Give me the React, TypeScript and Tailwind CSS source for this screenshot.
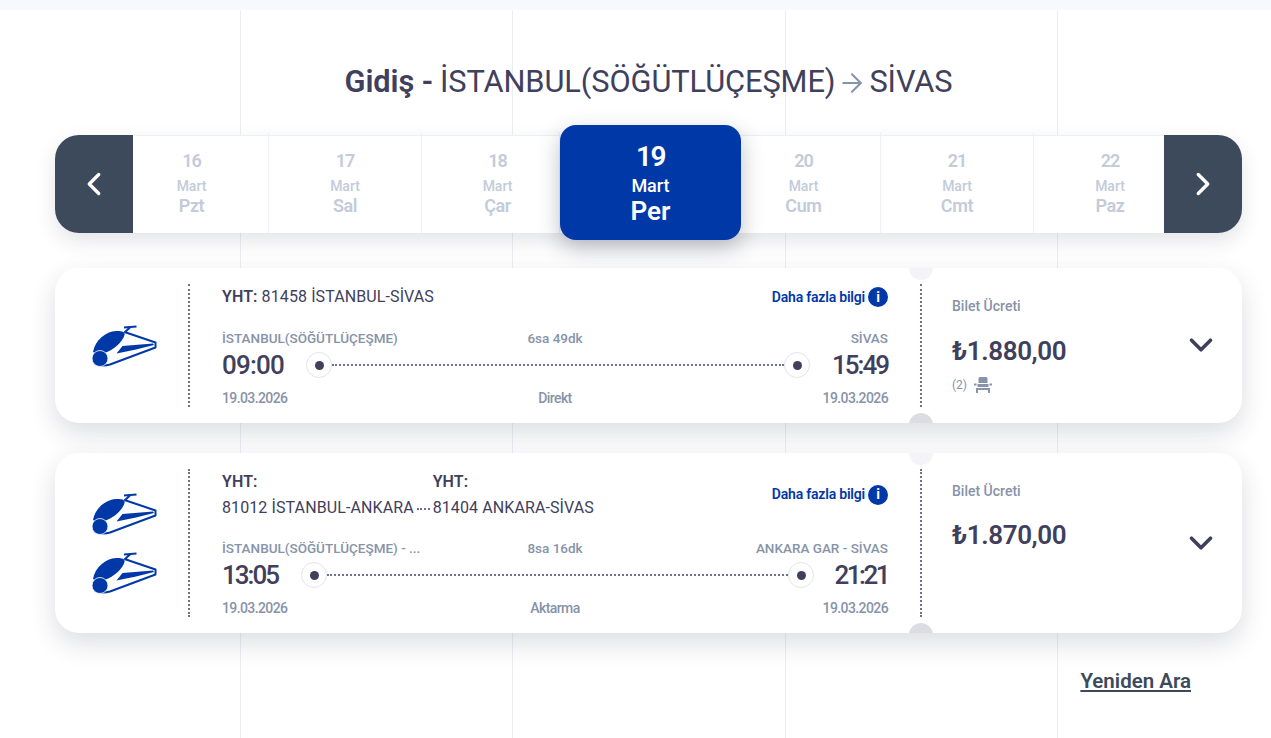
import React from "react";
import { ArrowRight, ChevronLeft, ChevronRight, ChevronDown } from "lucide-react";

const TrainIcon = () => (
  <svg width="65" height="42" viewBox="0 0 65 42" fill="none" className="block">
    <path d="M32.5 7 L63.5 17.5 L63.5 22.5 L18 39.5 C14 40.5 10 40.5 8 40" stroke="#0038a8" strokeWidth="2" strokeLinejoin="round" />
    <path d="M1 27 C3 15 14 6.5 24 6 C28 5.8 33.5 6 32.5 10 C30.5 17 22 25 12 28 C8 29 4 29 1 27 Z" fill="#0038a8" />
    <circle cx="8" cy="33.5" r="8" fill="#0038a8" stroke="#ffffff" strokeWidth="0.8" />
    <path d="M24.5 28.5 L30.5 21 L61 18.5 L62 20 L44 24.5 Z" fill="#0038a8" />
    <path d="M32 2.5 L44.5 1.5 M38.5 2 L32.5 7.5" stroke="#0038a8" strokeWidth="2" />
  </svg>
);

const SeatIcon = () => (
  <svg width="18" height="16" viewBox="0 0 18 16" fill="#8793a8" className="block">
    <path d="M4.5 1.5 Q4.5 0 6 0 H12 Q13.5 0 13.5 1.5 V6 H4.5 Z" />
    <rect x="3.5" y="7" width="11" height="3" />
    <rect x="0" y="6.5" width="2.5" height="2" />
    <rect x="15.5" y="6.5" width="2.5" height="2" />
    <rect x="2" y="11" width="14" height="2" />
    <rect x="2" y="11" width="2" height="5" />
    <rect x="14" y="11" width="2" height="5" />
  </svg>
);

const Day = ({ n, day, className }: { n: string; day: string; className: string }) => (
  <div className={`${className} flex flex-col items-center justify-center border-r border-[#edf0f4] last:border-r-0 text-[#c3cbd9] font-semibold -mt-[4px]`}>
    <span className="text-[18px] leading-[24px] tracking-[-1px]">{n}</span>
    <span className="text-[14px] leading-[20px] font-medium mt-[3px]">Mart</span>
    <span className="text-[18px] leading-[21px] tracking-[-0.4px] -mt-[1px]">{day}</span>
  </div>
);

const Stop = () => (
  <span className="w-[26px] h-[26px] rounded-full bg-white border border-[#e3e5ec] flex items-center justify-center shrink-0">
    <span className="w-[9px] h-[9px] rounded-full bg-[#40405c]" />
  </span>
);

const MoreInfo = () => (
  <div className="flex items-center gap-[3px] text-[#0038a8] text-[14px] font-semibold tracking-[-0.2px]">
    Daha fazla bilgi
    <span className="w-[20px] h-[20px] rounded-full bg-[#0038a8] text-white text-[14px] font-bold flex items-center justify-center">i</span>
  </div>
);

const Notches = () => (
  <div className="absolute inset-0 overflow-hidden rounded-[24px]">
    <span className="absolute left-[854px] -top-[12px] w-[24px] h-[24px] rounded-full bg-[#f4f4f8]" />
    <span className="absolute left-[854px] -bottom-[14px] w-[24px] h-[24px] rounded-full bg-[#dcdde3]" />
  </div>
);

export default function App() {
  return (
    <div className="relative min-h-[738px] h-[738px] overflow-hidden bg-white text-[#40405c] font-['Roboto',sans-serif]">
      <div className="h-[10px] bg-[#f8f9fc]" />
      <div className="absolute inset-x-0 top-[10px] bottom-0">
        <span className="absolute left-[240px] top-0 bottom-0 w-px bg-[#edeef2]" />
        <span className="absolute left-[512px] top-0 bottom-0 w-px bg-[#edeef2]" />
        <span className="absolute left-[785px] top-0 bottom-0 w-px bg-[#edeef2]" />
        <span className="absolute left-[1057px] top-0 bottom-0 w-px bg-[#edeef2]" />
      </div>

      <div className="relative px-[55px] w-[1297px]">
        <h1 className="pt-[52px] h-[125px] flex items-start justify-center text-[30.8px] leading-[40px] whitespace-nowrap tracking-[-0.1px]">
          <b className="font-semibold mr-[7px]">Gidiş -</b>
          İSTANBUL(SÖĞÜTLÜÇEŞME)
          <ArrowRight size={30} strokeWidth={1.6} className="text-[#8793a8] mt-[6px] mx-[2px]" />
          SİVAS
        </h1>

        <div className="flex h-[98px] w-[1187px] rounded-[24px] bg-white shadow-[0_8px_20px_rgba(40,45,70,0.13)]">
          <div className="w-[78px] rounded-l-[24px] bg-[#3d4a5c] text-white flex items-center justify-center">
            <ChevronLeft size={38} strokeWidth={2.1} />
          </div>
          <div className="flex flex-1 border-t border-[#edf0f4]">
            <Day n="16" day="Pzt" className="w-[136px] pr-[18px]" />
            <Day n="17" day="Sal" className="w-[153px]" />
            <Day n="18" day="Çar" className="w-[138px] pl-[14px]" />
            <div className="relative z-10 -my-[11px] w-[181px] h-[115px] rounded-[16px] bg-[#0038a8] text-white flex flex-col items-center justify-center font-semibold shadow-[0_8px_22px_rgba(40,45,70,0.3)]">
              <span className="text-[28px] leading-[30px] tracking-[-1.5px] mt-[2px]">19</span>
              <span className="text-[18px] leading-[24px] font-medium mt-[2px]">Mart</span>
              <span className="text-[26px] leading-[28px] -mt-[1px]">Per</span>
            </div>
            <Day n="20" day="Cum" className="w-[140px] pr-[14px]" />
            <Day n="21" day="Cmt" className="w-[153px]" />
            <Day n="22" day="Paz" className="w-[130px] pl-[22px]" />
          </div>
          <div className="w-[78px] rounded-r-[24px] bg-[#3d4a5c] text-white flex items-center justify-center">
            <ChevronRight size={38} strokeWidth={2.1} />
          </div>
        </div>

        {/* first journey */}
        <div className="relative mt-[35px] flex h-[155px] w-[1187px] rounded-[24px] bg-white shadow-[0_10px_26px_rgba(40,45,70,0.16)]">
          <Notches />
          <div className="relative w-[135px] pl-[5px] my-[16px] border-r-2 border-dotted border-[#6d7486] flex items-center justify-center">
            <TrainIcon />
          </div>
          <div className="relative w-[730px] pl-[32px] pr-[32px] pt-[17px] flex flex-col">
            <div className="flex items-center justify-between h-[24px]">
              <div className="text-[16px] whitespace-nowrap tracking-[0.1px]"><b className="font-semibold">YHT:</b> 81458 İSTANBUL-SİVAS</div>
              <MoreInfo />
            </div>
            <div className="mt-[19px] grid grid-cols-3 text-[13.5px] leading-[20px] text-[#8793a8] font-medium">
              <span className="whitespace-nowrap">İSTANBUL(SÖĞÜTLÜÇEŞME)</span>
              <span className="text-center">6sa 49dk</span>
              <span className="text-right">SİVAS</span>
            </div>
            <div className="mt-[2px] flex items-center h-[30px]">
              <span className="text-[26px] font-medium w-[84px] tracking-[-0.8px]">09:00</span>
              <Stop />
              <span className="flex-1 border-t-2 border-dotted border-[#6d7486]" />
              <Stop />
              <span className="text-[26px] font-medium w-[78px] text-right tracking-[-2px]">15:49</span>
            </div>
            <div className="mt-[8px] grid grid-cols-3 text-[14px] leading-[20px] text-[#8793a8] font-medium tracking-[-0.6px]">
              <span>19.03.2026</span>
              <span className="text-center">Direkt</span>
              <span className="text-right">19.03.2026</span>
            </div>
          </div>
          <div className="relative flex-1 my-[16px] border-l-2 border-dotted border-[#6d7486] pl-[30px] flex">
            <div className="flex-1">
              <div className="mt-[12px] text-[14px] leading-[20px] text-[#8793a8] font-medium">Bilet Ücreti</div>
              <div className="mt-[17px] text-[26px] leading-[36px] font-semibold tracking-[-0.4px]">₺1.880,00</div>
              <div className="mt-[7px] flex items-center gap-[7px] text-[12px] text-[#8793a8]">(2) <SeatIcon /></div>
            </div>
            <ChevronDown size={38} strokeWidth={2.3} className="mr-[22px] mt-[42px]" />
          </div>
        </div>

        {/* connecting journey */}
        <div className="relative mt-[30px] flex h-[180px] w-[1187px] rounded-[24px] bg-white shadow-[0_10px_26px_rgba(40,45,70,0.16)]">
          <Notches />
          <div className="relative w-[135px] pl-[5px] my-[16px] border-r-2 border-dotted border-[#6d7486] flex flex-col items-center justify-center gap-[17px]">
            <TrainIcon />
            <TrainIcon />
          </div>
          <div className="relative w-[730px] pl-[32px] pr-[32px] pt-[17px] flex flex-col">
            <div className="flex items-center justify-between h-[49px]">
              <div className="flex items-end text-[16px] leading-[26px] whitespace-nowrap tracking-[0.1px]">
                <div>
                  <b className="block font-semibold">YHT:</b>
                  81012 İSTANBUL-ANKARA
                </div>
                <span className="w-[13px] mb-[11px] mx-[3px] border-t-2 border-dotted border-[#6d7486]" />
                <div>
                  <b className="block font-semibold">YHT:</b>
                  81404 ANKARA-SİVAS
                </div>
              </div>
              <MoreInfo />
            </div>
            <div className="mt-[19px] grid grid-cols-3 text-[13.5px] leading-[20px] text-[#8793a8] font-medium">
              <span className="whitespace-nowrap">İSTANBUL(SÖĞÜTLÜÇEŞME) - ...</span>
              <span className="text-center">8sa 16dk</span>
              <span className="text-right whitespace-nowrap">ANKARA GAR - SİVAS</span>
            </div>
            <div className="mt-[2px] flex items-center h-[30px]">
              <span className="text-[26px] font-medium w-[79px] tracking-[-2px]">13:05</span>
              <Stop />
              <span className="flex-1 border-t-2 border-dotted border-[#6d7486]" />
              <Stop />
              <span className="text-[26px] font-medium w-[74px] text-right tracking-[-2.5px]">21:21</span>
            </div>
            <div className="mt-[8px] grid grid-cols-3 text-[14px] leading-[20px] text-[#8793a8] font-medium tracking-[-0.6px]">
              <span>19.03.2026</span>
              <span className="text-center">Aktarma</span>
              <span className="text-right">19.03.2026</span>
            </div>
          </div>
          <div className="relative flex-1 my-[16px] border-l-2 border-dotted border-[#6d7486] pl-[30px] flex">
            <div className="flex-1">
              <div className="mt-[12px] text-[14px] leading-[20px] text-[#8793a8] font-medium">Bilet Ücreti</div>
              <div className="mt-[16px] text-[26px] leading-[36px] font-semibold tracking-[-0.4px]">₺1.870,00</div>
            </div>
            <ChevronDown size={38} strokeWidth={2.3} className="mr-[22px] mt-[55px]" />
          </div>
        </div>

        <div className="w-[1136px] mt-[34px] text-right text-[20.5px] leading-[28px] font-semibold text-[#3d4a5c] underline">
          Yeniden Ara
        </div>
      </div>
    </div>
  );
}
